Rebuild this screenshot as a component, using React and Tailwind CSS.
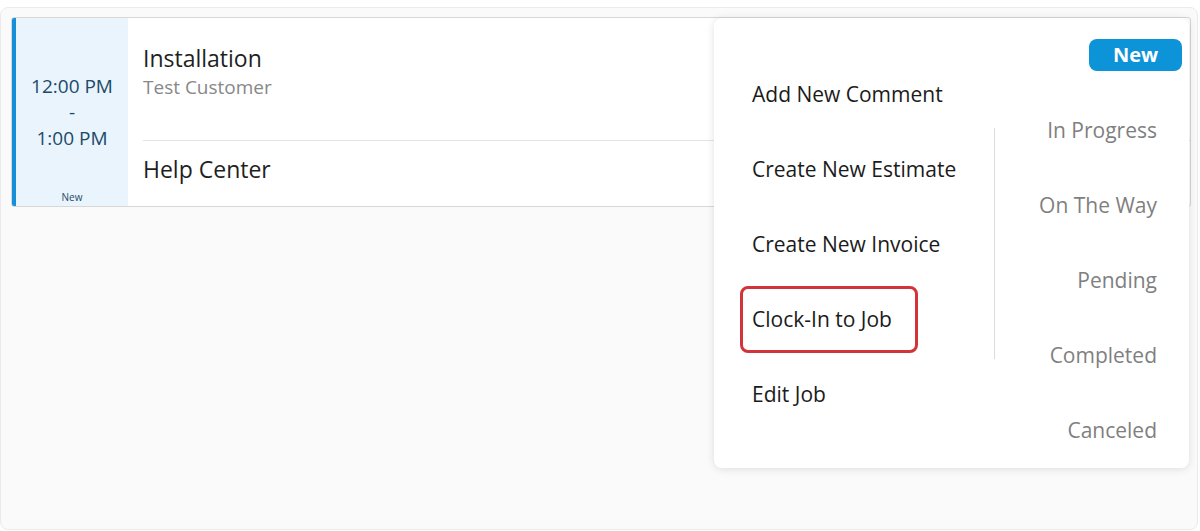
import { useState } from 'react';

const actions = ['Add New Comment', 'Create New Estimate', 'Create New Invoice', 'Clock-In to Job', 'Edit Job'];
const statuses = ['In Progress', 'On The Way', 'Pending', 'Completed', 'Canceled'];

export default function App() {
  const [status] = useState('New');

  return (
    <main className="h-[531px] w-[1200px] overflow-hidden bg-white pt-[7px] font-['Open_Sans',sans-serif]">
      <div className="relative h-[523px] w-[1198px] rounded-lg border border-[#ebebeb] bg-[#fafafa] px-[10px] pt-[9px]">
        {/* job card */}
        <div className="flex h-[190px] w-[1180px] overflow-hidden rounded-[3px] border border-[#d7d7d7] bg-white">
          <div className="flex w-[116px] shrink-0 flex-col items-center border-l-4 border-[#1590d8] bg-[#e9f4fd] text-[#1c4a69]">
            <div className="mt-[55px] flex flex-col items-center text-[19px] leading-[26px]">
              <span>12:00 PM</span>
              <span>-</span>
              <span>1:00 PM</span>
            </div>
            <span className="mt-auto mb-[3px] text-[10px] leading-[12px]">{status}</span>
          </div>
          <div className="flex flex-1 flex-col pl-[15px]">
            <div className="h-[123px] border-b border-[#e4e4e4] pt-[25px]">
              <p className="text-[23px] leading-[31px] text-[#1f1f1f]">Installation</p>
              <p className="text-[19px] leading-[26px] text-[#888]">Test Customer</p>
            </div>
            <p className="pt-[13px] text-[23px] leading-[31px] text-[#1f1f1f]">Help Center</p>
          </div>
        </div>

        {/* actions menu */}
        <div className="absolute left-[713px] top-[10px] flex h-[450px] w-[475px] rounded-lg bg-white shadow-[0_1px_8px_rgba(0,0,0,0.12)]">
          <ul className="w-[280px] pl-[38px] pt-[39px]">
            {actions.map((label) => (
              <li key={label} className="flex h-[75px] items-center text-[21px] text-[#1b1b1b]">
                <span className="relative">
                  {label}
                  {label === 'Clock-In to Job' && (
                    <span className="absolute -left-[12px] -right-[26px] -top-[18px] -bottom-[18px] rounded-lg border-[3px] border-[#d2343a]" />
                  )}
                </span>
              </li>
            ))}
          </ul>
          <div className="mt-[110px] h-[231px] w-px bg-[#dcdcdc]" />
          <div className="flex flex-1 flex-col items-end pr-[7px] pt-[21px]">
            <span className="flex h-[36px] w-[93px] items-center justify-center rounded-lg bg-[#0d93d8] text-[20px] font-bold text-white">
              {status}
            </span>
            <ul className="mt-[22px] flex flex-col items-end pr-[25px]">
              {statuses.map((label) => (
                <li key={label} className="flex h-[75px] items-center text-[21px] text-[#7f7f7f]">
                  {label}
                </li>
              ))}
            </ul>
          </div>
        </div>
      </div>
    </main>
  );
}
